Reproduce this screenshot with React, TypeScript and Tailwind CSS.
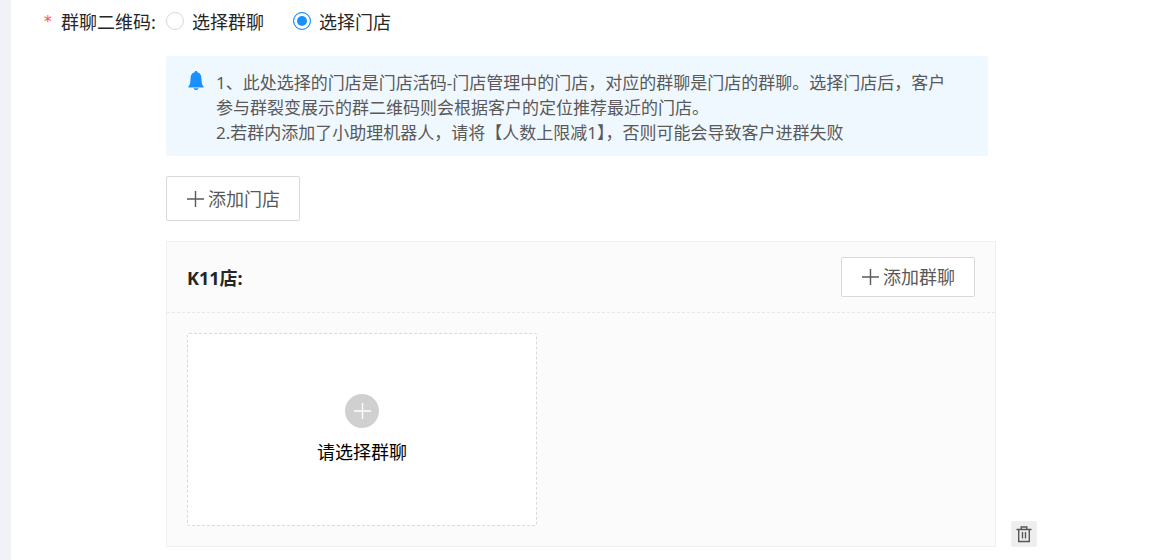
import { useState } from "react";

type Target = "group" | "store";

const targets: { value: Target; label: string }[] = [
  { value: "group", label: "选择群聊" },
  { value: "store", label: "选择门店" },
];

const PlusIcon = ({ className = "" }: { className?: string }) => (
  <svg
    viewBox="0 0 18 18"
    className={className}
    fill="none"
    stroke="currentColor"
    strokeWidth="1.4"
    aria-hidden="true"
  >
    <path d="M9.5 1v16M1 9h17" />
  </svg>
);

const BellIcon = () => (
  <svg viewBox="0 0 16 20" className="w-4 h-5 shrink-0 text-[#1890ff]" fill="currentColor" aria-hidden="true">
    <path d="M8 0c-.8 0-1.300.5-1.400 1.300C4 2 2.700 4 2.600 6.800L2.300 11c-.1 1.900-.7 3.300-1.900 4.600v.9h15.200v-.9c-1.200-1.300-1.800-2.700-1.900-4.600l-.3-4.200C13.300 4 12 2 9.400 1.300 9.300.5 8.800 0 8 0z" />
    <path d="M5.500 17.200h5c-.3 1.100-1.200 1.800-2.500 1.800s-2.200-.7-2.500-1.800z" />
  </svg>
);

const TrashIcon = () => (
  <svg viewBox="0 0 16 18" className="w-4 h-[18px]" fill="none" stroke="currentColor" strokeWidth="1.4" aria-hidden="true">
    <path d="M.5 4.500h15M5.200 4.500V2h5.600v2.500M2.700 4.500v12h10.600v-12M6.500 7v6.500M9.500 7v6.500" />
  </svg>
);

const AddButton = ({ children, className }: { children: string; className: string }) => (
  <button
    type="button"
    className={`flex items-center gap-1 px-[19px] border border-[#d9d9d9] rounded-xs bg-white text-lg text-[#595959] whitespace-nowrap ${className}`}
  >
    <PlusIcon className="w-[18px] h-[18px]" />
    {children}
  </button>
);

const Notice = () => (
  <div className="flex items-start mr-[49px] pl-[22px] pr-8 pt-[14px] pb-[11px] rounded-xs bg-[#f0f8ff]">
    <div className="pt-px">
      <BellIcon />
    </div>
    <div className="ml-3 text-[17px] leading-[25px] text-[#595959]">
      <p>
        1、此处选择的门店是门店活码-门店管理中的门店，对应的群聊是门店的群聊。选择门店后，客户参与群裂变展示的群二维码则会根据客户的定位推荐最近的门店。
      </p>
      <p>2.若群内添加了小助理机器人，请将【人数上限减1】，否则可能会导致客户进群失败</p>
    </div>
  </div>
);

const StoreCard = ({ name }: { name: string }) => (
  <section className="flex-1 border border-[#f0f0f0] bg-[#fbfbfb]">
    <header className="flex items-center justify-between px-5 py-[15px] border-b border-dashed border-[#e8e8e8]">
      <h3 className="pt-0.5 text-lg font-bold text-[#262626]">{name}:</h3>
      <AddButton className="h-10">添加群聊</AddButton>
    </header>
    <div className="p-5">
      <button
        type="button"
        className="flex flex-col items-center justify-center gap-3 w-[350px] h-[193px] pb-0.5 border border-dashed border-[#d9d9d9] rounded-xs bg-white text-lg leading-6 text-black"
      >
        <span className="flex items-center justify-center w-[34px] h-[34px] rounded-full bg-[#d0d0d0] text-white">
          <PlusIcon className="w-[18px] h-[18px]" />
        </span>
        请选择群聊
      </button>
    </div>
  </section>
);

export default function App() {
  const [target, setTarget] = useState<Target>("store");

  return (
    <div className="flex min-h-screen bg-[#f0f2f5] pl-[11px] font-['Noto_Sans','Noto_Sans_CJK_SC',sans-serif]">
      <main className="flex-1 flex bg-white pl-8 pr-[113px] pb-3">
        {/* Label */}
        <div className="flex w-[123px] shrink-0 pt-2 text-lg text-[#262626] whitespace-nowrap">
          <span className="w-[18px] pt-0.5 font-['DejaVu_Sans_Mono',monospace] text-base text-[#ff4d4f]">*</span>
          <span id="target-label">群聊二维码:</span>
        </div>

        <div className="flex-1 min-w-0">
          {/* Target type */}
          <div
            role="radiogroup"
            aria-labelledby="target-label"
            className="flex gap-[29px] pt-2 text-lg text-[#262626]"
          >
            {targets.map(({ value, label }) => (
              <label key={value} className="flex items-center gap-2">
                <input
                  type="radio"
                  name="target"
                  value={value}
                  checked={target === value}
                  onChange={() => setTarget(value)}
                  className="appearance-none w-[18px] h-[18px] mb-0.5 rounded-full border border-[#d9d9d9] bg-white checked:border-[#1890ff] checked:bg-[#1890ff] checked:shadow-[inset_0_0_0_3px_#fff]"
                />
                {label}
              </label>
            ))}
          </div>

          <div className="mt-5">
            <Notice />
          </div>

          <AddButton className="h-[45px] my-5">添加门店</AddButton>

          {/* Selected stores */}
          <div className="flex items-end gap-[15px]">
            <StoreCard name="K11店" />
            <button
              type="button"
              aria-label="删除"
              className="flex items-center justify-center w-[26px] h-[26px] rounded-xs bg-[#eee] text-[#555]"
            >
              <TrashIcon />
            </button>
          </div>
        </div>
      </main>
    </div>
  );
}
